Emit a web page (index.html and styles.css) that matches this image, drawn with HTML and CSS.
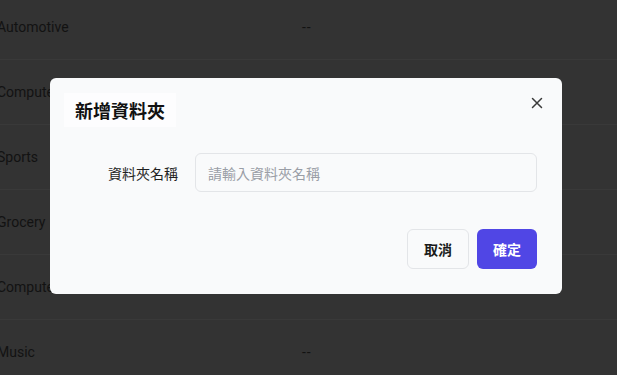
FILE: index.html
```html
<!DOCTYPE html>
<html lang="zh-Hant">
<head>
<meta charset="utf-8">
<link rel="stylesheet" href="styles.css">
</head>
<body>
<div class="table">
  <div class="row"><span class="c1">Automotive</span><span class="c2">--</span></div>
  <div class="row"><span class="c1">Computers</span><span class="c2">--</span></div>
  <div class="row"><span class="c1">Sports</span><span class="c2">--</span></div>
  <div class="row"><span class="c1">Grocery</span><span class="c2">--</span></div>
  <div class="row"><span class="c1">Computers</span><span class="c2">--</span></div>
  <div class="row"><span class="c1">Music</span><span class="c2">--</span></div>
</div>
<div class="modal">
  <div class="head">
    <h2 class="title">新增資料夾</h2>
    <button class="close" aria-label="close">
      <svg width="12" height="12" viewBox="0 0 12 12"><path d="M1.5 1.5L10.5 10.5M10.5 1.5L1.5 10.5" stroke="#3a3a3a" stroke-width="1.5" stroke-linecap="round"/></svg>
    </button>
  </div>
  <div class="field">
    <label class="label">資料夾名稱</label>
    <input class="input" placeholder="請輸入資料夾名稱">
  </div>
  <div class="actions">
    <button class="btn cancel">取消</button>
    <button class="btn ok">確定</button>
  </div>
</div>
</body>
</html>
```
FILE: styles.css
```css
html, body {
  margin: 0;
  padding: 0;
  width: 617px;
  height: 375px;
  overflow: hidden;
  background: #333333;
  font-family: Roboto, "Noto Sans CJK TC", sans-serif;
}
.table {
  margin-top: -6px;
  margin-left: -3px;
}
.row {
  height: 64px;
  box-sizing: content-box;
  padding-top: 1px;
  margin-top: -1px;
  border-bottom: 1px solid #393939;
  display: flex;
  align-items: center;
  font-size: 14px;
  color: #121212;
}
.c1 { width: 305px; }
.c2 { letter-spacing: 1px; }
.modal {
  position: absolute;
  left: 50px;
  top: 78px;
  width: 512px;
  height: 216px;
  box-sizing: border-box;
  background: #f9fafb;
  border-radius: 6px;
  padding: 15px 25px 25px 14px;
  display: flex;
  flex-direction: column;
  font-family: "Noto Sans CJK TC", sans-serif;
}
.head {
  display: flex;
  justify-content: space-between;
  align-items: flex-start;
}
.title {
  margin: 0;
  background: #fdfdfe;
  padding: 0 11px;
  height: 34px;
  line-height: 34px;
  font-size: 18px;
  font-weight: 700;
  color: #111111;
}
.close {
  border: 0;
  background: none;
  padding: 0;
  margin-top: 4px;
  margin-right: -6px;
  width: 12px;
  height: 12px;
  display: flex;
}
.field {
  display: flex;
  align-items: center;
  margin-top: 26px;
  gap: 17px;
}
.label {
  width: 114px;
  text-align: right;
  font-size: 14px;
  color: #1f1f1f;
}
.input {
  flex: 1;
  height: 39px;
  box-sizing: border-box;
  border: 1px solid #e3e5e8;
  border-radius: 6px;
  background: #f9fafb;
  padding: 0 12px;
  font-family: "Noto Sans CJK TC", sans-serif;
  font-size: 14px;
  outline: none;
}
.input::placeholder { color: #9a9ea6; }
.actions {
  margin-top: auto;
  display: flex;
  justify-content: flex-end;
  gap: 8px;
}
.btn {
  height: 40px;
  border-radius: 6px;
  font-family: "Noto Sans CJK TC", sans-serif;
  font-size: 14px;
  font-weight: 700;
  padding: 0;
}
.cancel {
  width: 62px;
  background: #f9fafb;
  border: 1px solid #e3e5e8;
  color: #1a1a1a;
}
.ok {
  width: 60px;
  background: #5046e5;
  border: 0;
  color: #ffffff;
}
```
